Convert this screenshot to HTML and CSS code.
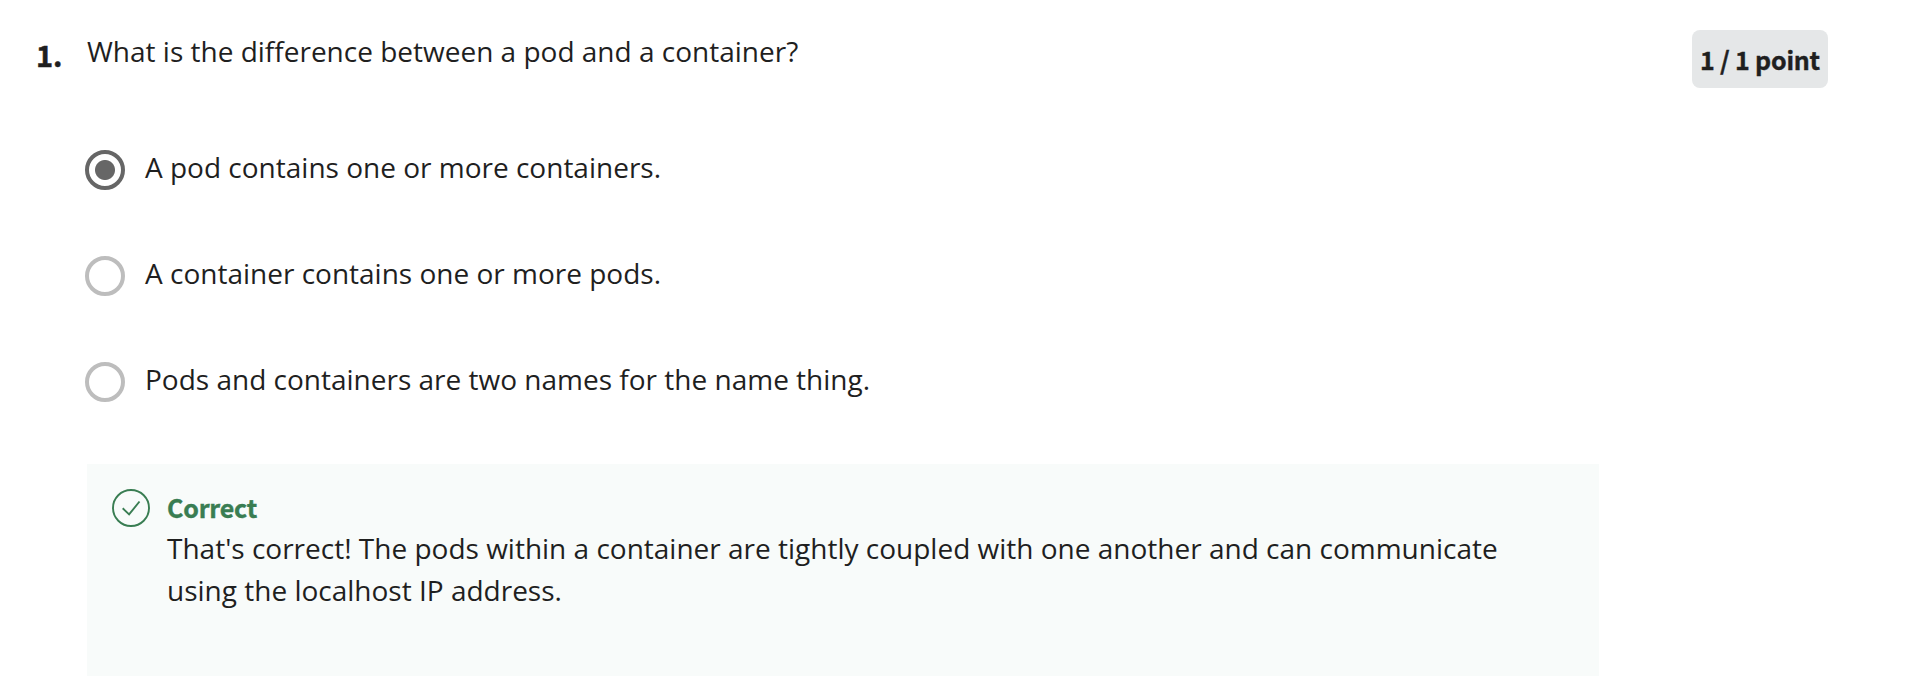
FILE: index.html
```html
<!DOCTYPE html>
<html lang="en">
<head>
<meta charset="utf-8">
<title>Quiz</title>
<link rel="stylesheet" href="styles.css">
</head>
<body>
<main class="question">
  <div class="number">1.</div>
  <section class="content">
    <h1 class="prompt">What is the difference between a pod and a container?</h1>
    <div class="options">
      <div class="option"><span class="radio checked"></span><span>A pod contains one or more containers.</span></div>
      <div class="option"><span class="radio"></span><span>A container contains one or more pods.</span></div>
      <div class="option"><span class="radio"></span><span>Pods and containers are two names for the name thing.</span></div>
    </div>
    <div class="feedback">
      <svg class="tick" viewBox="0 0 38 38" fill="none" stroke="#397d52" stroke-width="1.9"><circle cx="19" cy="19" r="18"/><path d="M10.7 19.3l6.4 6.1 10.4-12.9"/></svg>
      <div class="message">
        <div class="verdict">Correct</div>
        <p class="explain">That's correct! The pods within a container are tightly coupled with one another and can communicate<br>using the localhost IP address.</p>
      </div>
    </div>
  </section>
  <div class="points">1 / 1 point</div>
</main>
</body>
</html>
```
FILE: styles.css
```css
* { box-sizing: border-box; }
body { margin: 0; background: #fff; color: #1f1f1f; font: 28px/42px "Open Sans", sans-serif; }
.question { display: flex; align-items: flex-start; height: 682px; padding: 30px 0 0 36px; overflow: hidden; }
.number { width: 51px; flex: none; padding-top: 3px; font: 700 29px/42px "Noto Sans CJK SC", sans-serif; -webkit-text-stroke: 0.5px; }
.content { width: 1512px; flex: none; }
.prompt { margin: 0; font-size: 28px; font-weight: 400; line-height: 42px; }
.options { padding-top: 74px; }
.option { display: flex; align-items: flex-start; height: 106px; margin-left: -2px; }
.radio { width: 40px; height: 40px; margin: 4px 20px 0 0; border: 4px solid #bdbdbd; border-radius: 50%; }
.checked { border-color: #666; background: radial-gradient(circle, #666 9.5px, transparent 10.5px); }
.feedback { display: flex; height: 212px; padding: 25px; background: #f8fbfa; }
.tick { width: 38px; height: 38px; flex: none; margin-right: 17px; }
.verdict { padding-bottom: 2px; color: #397d52; font: 700 25px/36px "Noto Sans CJK SC", sans-serif; letter-spacing: -0.2px; -webkit-text-stroke: 0.4px; }
.explain { margin: 0; white-space: nowrap; }
.points { width: 136px; height: 58px; flex: none; margin-left: 93px; border-radius: 8px; background: #e5e7e8; text-align: center; font: 700 25px/58px "Noto Sans CJK SC", sans-serif; letter-spacing: -0.2px; -webkit-text-stroke: 0.4px; white-space: nowrap; }
```
